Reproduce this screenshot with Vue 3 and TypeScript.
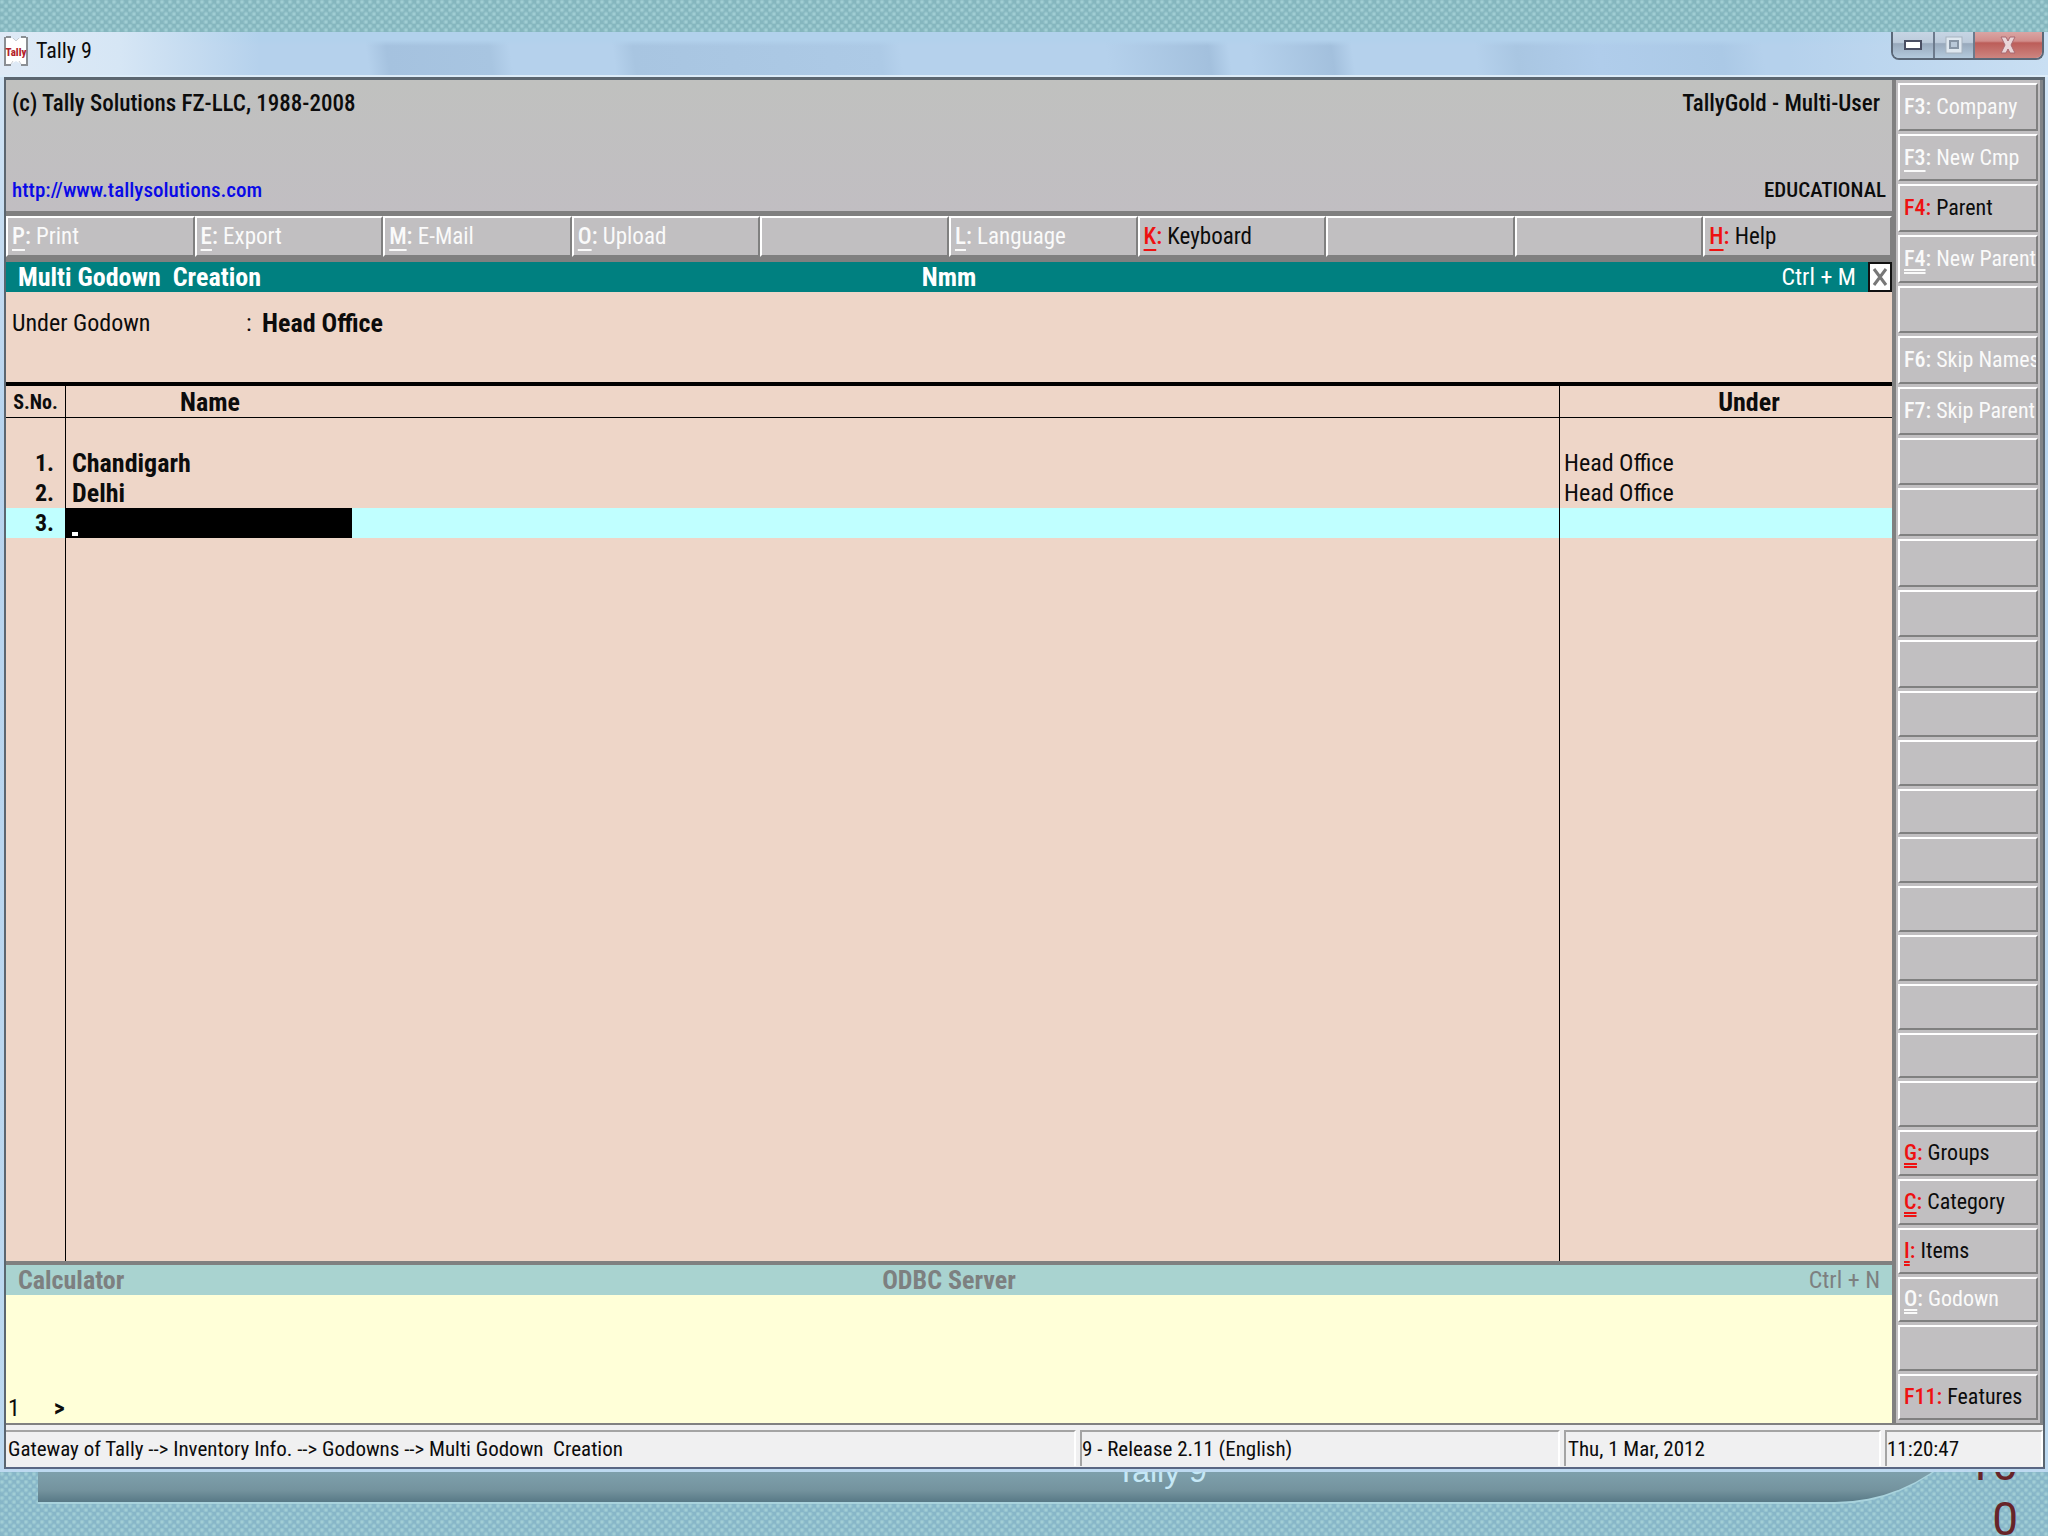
<script setup lang="ts">
import { ref } from 'vue'

interface Command {
  key?: string
  label?: string
  line?: 'single' | 'double'
  active?: boolean
}

interface Godown {
  no: number
  name: string
  under: string
}

const toolbar: Command[] = [
  { key: 'P', label: 'Print', line: 'single' },
  { key: 'E', label: 'Export', line: 'single' },
  { key: 'M', label: 'E-Mail', line: 'single' },
  { key: 'O', label: 'Upload', line: 'single' },
  {},
  { key: 'L', label: 'Language', line: 'single' },
  { key: 'K', label: 'Keyboard', line: 'single', active: true },
  {},
  {},
  { key: 'H', label: 'Help', line: 'single', active: true },
]

const blanks = (count: number): Command[] => Array.from({ length: count }, () => ({}))

const upperCommands: Command[] = [
  { key: 'F3', label: 'Company' },
  { key: 'F3', label: 'New Cmp', line: 'single' },
  { key: 'F4', label: 'Parent', active: true },
  { key: 'F4', label: 'New Parent', line: 'double' },
  {},
  { key: 'F6', label: 'Skip Names' },
  { key: 'F7', label: 'Skip Parent' },
  ...blanks(5),
]

const lowerCommands: Command[] = [
  ...blanks(9),
  { key: 'G', label: 'Groups', line: 'double', active: true },
  { key: 'C', label: 'Category', line: 'double', active: true },
  { key: 'I', label: 'Items', line: 'double', active: true },
  { key: 'O', label: 'Godown', line: 'double' },
  {},
  { key: 'F11', label: 'Features', active: true },
]

const commandGroups = [
  { id: 'upper', items: upperCommands },
  { id: 'lower', items: lowerCommands },
]

const godowns: Godown[] = [
  { no: 1, name: 'Chandigarh', under: 'Head Office' },
  { no: 2, name: 'Delhi', under: 'Head Office' },
]

const newName = ref('')
</script>

<template>
  <div class="slide">
    <div class="window">
      <header class="titlebar">
        <svg class="logo" viewBox="0 0 24 30" aria-hidden="true">
          <path d="M2 2h6l4 3 4-3h6v26h-5l-5-3-5 3H2z" fill="#fff" />
          <path d="M1 1v28h6M23 1v28h-6M2 1h5M17 1h5" fill="none" stroke="#8b8f94" stroke-width="2" />
          <path d="M7 28l2-3M17 28l-2-3M9 2l3 3 3-3" fill="none" stroke="#c9cdd2" stroke-width="1" />
          <text x="12" y="20" text-anchor="middle" font-size="11" font-weight="800" fill="#b3222a">Tally</text>
        </svg>
        <h1 class="app-name">Tally 9</h1>
        <div class="controls">
          <button type="button" class="control minimise" aria-label="Minimise">
            <svg viewBox="0 0 18 10" width="18" height="10"><rect x="1" y="1" width="16" height="8" fill="#fff" stroke="#4a4f63" stroke-width="2" /></svg>
          </button>
          <button type="button" class="control maximise" aria-label="Maximise">
            <svg viewBox="0 0 18 18" width="18" height="18">
              <rect x="1" y="1" width="16" height="16" fill="#dfe8f0" stroke="#a7b3c0" stroke-width="1" />
              <rect x="5" y="5" width="8" height="7" fill="#b9c8d8" stroke="#8795a5" stroke-width="2" />
            </svg>
          </button>
          <button type="button" class="control close" aria-label="Close">
            <svg viewBox="0 0 18 18" width="18" height="18">
              <path d="M2 1h5l2 4 2-4h5l-4 8 4 8h-5l-2-4-2 4H2l4-8z" fill="#e9d5d8" stroke="#a96970" stroke-width="1" />
            </svg>
          </button>
        </div>
      </header>

      <div class="frame">
        <div class="workspace">
          <div class="main">
            <section class="info">
              <div class="info-row">
                <span>(c) Tally Solutions FZ-LLC, 1988-2008</span>
                <span class="edition">TallyGold - Multi-User</span>
              </div>
              <div class="info-row small">
                <a href="http://www.tallysolutions.com">http://www.tallysolutions.com</a>
                <span>EDUCATIONAL</span>
              </div>
            </section>

            <nav class="toolbar" aria-label="Toolbar">
              <button v-for="(c, i) in toolbar" :key="i" type="button" class="cmd" :class="{ active: c.active }">
                <template v-if="c.key"><b><span :class="c.line">{{ c.key }}</span>:</b> {{ c.label }}</template>
              </button>
            </nav>

            <div class="caption">
              <h2>Multi Godown&nbsp; Creation</h2>
              <b>Nmm</b>
              <div class="caption-end">
                <span>Ctrl + M</span>
                <button type="button" class="caption-close" aria-label="Close form">
                  <svg viewBox="0 0 16 20" width="16" height="20"><path d="M2 2l12 16M14 2L2 18" stroke="#777" stroke-width="3" /></svg>
                </button>
              </div>
            </div>

            <section class="form">
              <div class="parent">
                <span class="parent-label">Under Godown</span>
                <span class="colon">:</span>
                <b>Head Office</b>
              </div>
              <table class="grid">
                <thead>
                  <tr>
                    <th class="no">S.No.</th>
                    <th class="name">Name</th>
                    <th class="under">Under</th>
                  </tr>
                </thead>
                <tbody>
                  <tr class="row"><td></td><td></td><td></td></tr>
                  <tr v-for="g in godowns" :key="g.no" class="row">
                    <td class="no">{{ g.no }}.</td>
                    <td class="name">{{ g.name }}</td>
                    <td class="under">{{ g.under }}</td>
                  </tr>
                  <tr class="row current">
                    <td class="no">3.</td>
                    <td class="entry"><input v-model="newName" type="text" aria-label="Name of godown 3" /></td>
                    <td></td>
                  </tr>
                  <tr class="filler"><td></td><td></td><td></td></tr>
                </tbody>
              </table>
            </section>

            <section class="calc">
              <div class="calc-head">
                <h2>Calculator</h2>
                <b>ODBC Server</b>
                <span class="calc-key">Ctrl + N</span>
              </div>
              <div class="calc-body"><span>1</span><b>&gt;</b></div>
            </section>
          </div>

          <aside class="side" aria-label="Commands">
            <div v-for="group in commandGroups" :key="group.id" class="group" :class="group.id">
              <button v-for="(c, i) in group.items" :key="i" type="button" class="cmd" :class="{ active: c.active }">
                <template v-if="c.key"><b><span :class="c.line">{{ c.key }}</span>:</b> {{ c.label }}</template>
              </button>
            </div>
          </aside>
        </div>

        <footer class="status">
          <span class="path">Gateway of Tally --&gt; Inventory Info. --&gt; Godowns --&gt; Multi Godown&nbsp; Creation</span>
          <span class="release">9 - Release 2.11 (English)</span>
          <span class="date">Thu, 1 Mar, 2012</span>
          <span class="time">11:20:47</span>
        </footer>
      </div>
    </div>

    <div class="slide-foot">
      <div class="band"><span>Tally 9</span></div>
      <div class="page-no">10<br />0</div>
    </div>
  </div>
</template>

<style>
body {
  margin: 0;
}
</style>

<style scoped>
* {
  box-sizing: border-box;
}

.slide {
  min-height: 100vh;
  display: flex;
  flex-direction: column;
  padding-top: 32px;
  overflow: hidden;
  font-family: 'Roboto Condensed', 'Liberation Sans', sans-serif;
  font-size: 24px;
  line-height: 30px;
  color: #0c0c0c;
  background:
    radial-gradient(circle at 2px 2px, #a9d5da 0, transparent 3px) 0 0 / 8px 8px,
    radial-gradient(circle at 6px 6px, #a9d5da 0, transparent 3px) 0 0 / 8px 8px,
    linear-gradient(#85b6be, #87b6c8);
}

h1,
h2 {
  margin: 0;
  font-size: 26px;
  line-height: 30px;
}

button {
  font: inherit;
  color: inherit;
  margin: 0;
  padding: 0;
}

/* Window chrome */
.window {
  flex: 1;
  display: flex;
  flex-direction: column;
  padding: 0 3px 3px 4px;
  background: linear-gradient(#d4e6f6 0, #b8d4ee 400px, #bdd9f0);
}

.titlebar {
  display: flex;
  height: 45px;
  margin: 0 -3px 0 -4px;
  padding: 0 4px;
  border-bottom: 2px solid #dcecf9;
  background:
    linear-gradient(90deg, #dfeaf6 0, #d6e6f5 120px, transparent 260px, transparent calc(100% - 260px), #c9dff3 100%),
    linear-gradient(#b2d1ec 0, #b2d1ec 8px, transparent 14px),
    linear-gradient(82deg, #b5d1ec 18%, #a5c2df 19%, #a8c5e1 24%, #b5d1ec 25%, #b5d1ec 30%, #a8c5e1 31%, #adcae6 43%, #b5d1ec 44%, #b5d1ec 54%, #a3c0dd 59%, #b5d1ec 60%, #b5d1ec 61%, #a3c0dd 65%, #b5d1ec 66%, #b5d1ec 72%, #a9c6e2 74%, #b0cdeb 78%, #abc9e6 84%, #b5d1ec 86%);
}

.logo {
  width: 24px;
  height: 30px;
  margin-top: 4px;
}

.app-name {
  margin: 4px 0 0 8px;
  font-size: 22px;
  font-weight: 400;
}

.controls {
  display: flex;
  width: 153px;
  height: 28px;
  margin-left: auto;
  border: 2px solid #5b6878;
  border-top: 0;
  border-radius: 0 0 8px 8px;
  overflow: hidden;
}

.control {
  display: flex;
  align-items: center;
  justify-content: center;
  border: 0;
  border-right: 2px solid #6c7a8c;
  background: linear-gradient(#c7d5e4 0, #bccbdb 40%, #98a9bc 45%, #b4cadd 100%);
}

.minimise {
  flex: 42;
}

.maximise {
  flex: 40;
}

.close {
  flex: 71;
  border-right: 0;
  background: linear-gradient(#d9a5a4 0, #d18d8b 35%, #bc5d59 42%, #cc8580 100%);
}

.frame {
  flex: 1;
  display: flex;
  flex-direction: column;
  border: 2px solid #5b6670;
  border-top-width: 3px;
  border-bottom-color: #5a6783;
  background: #c1bfc1;
}

.workspace {
  flex: 1;
  display: flex;
}

.main {
  flex: 1;
  min-width: 0;
  display: flex;
  flex-direction: column;
  border-right: 4px solid #808080;
}

/* Product information */
.info {
  height: 131px;
  display: flex;
  flex-direction: column;
  justify-content: space-between;
  padding: 9px 6px 6px;
  background: linear-gradient(#c0c1bf, #c1bec2);
}

.info-row {
  display: flex;
  justify-content: space-between;
  font-size: 23px;
  font-weight: 500;
}

.info-row.small {
  font-size: 21px;
}

.edition {
  padding-right: 6px;
}

a {
  color: #0a0ae6;
  text-decoration: none;
}

/* Command buttons */
.toolbar {
  display: flex;
  height: 51px;
  padding: 2px 0 5px;
  border-top: 3px solid #808080;
  background: #808080;
  font-size: 23px;
}

.cmd {
  flex: 1 1 0;
  min-width: 0;
  min-height: 0;
  overflow: hidden;
  text-align: left;
  white-space: nowrap;
  padding-left: 4px;
  color: #fafafa;
  background: #c1bfc1;
  border: 2px solid;
  border-color: #fff #808080 #808080 #fff;
}

.cmd b {
  font-weight: 500;
}

.cmd.active {
  color: #0c0c0c;
}

.cmd.active b {
  color: #ee1111;
}

.single,
.double {
  text-decoration: underline 2px;
  text-underline-offset: 5px;
  text-decoration-skip-ink: none;
}

.double {
  text-decoration-style: double;
  text-underline-offset: 3px;
}

/* Form caption */
.caption,
.calc-head {
  display: grid;
  grid-template-columns: 1fr auto 1fr;
  height: 30px;
  color: #fff;
  background: #008080;
}

.caption h2,
.calc-head h2 {
  padding-left: 12px;
}

.caption b,
.calc-head b {
  font-size: 26px;
}

.caption-end {
  display: flex;
  justify-content: flex-end;
  gap: 12px;
}

.caption-close {
  display: flex;
  align-items: center;
  justify-content: center;
  width: 24px;
  border: 2px solid #111;
  background: #fff;
}

/* Godown form */
.form {
  flex: 1;
  display: flex;
  flex-direction: column;
  background: #eed6c8;
}

.parent {
  display: flex;
  height: 90px;
  padding: 16px 6px 0;
}

.parent b {
  font-size: 26px;
}

.parent-label {
  width: 234px;
}

.colon {
  width: 16px;
}

.grid {
  flex: 1;
  width: 100%;
  border-collapse: separate;
  border-spacing: 0;
  table-layout: fixed;
  border-top: 4px solid #000;
}

th,
td {
  padding: 0;
  border-right: 1px solid #000;
}

th:last-child,
td:last-child {
  border-right: 0;
}

th {
  height: 32px;
  font-size: 26px;
  border-bottom: 1px solid #000;
}

th.no {
  width: 60px;
  font-size: 20px;
}

th.name {
  text-align: left;
  padding-left: 114px;
}

th.under {
  width: 332px;
  padding-left: 46px;
}

.row td {
  height: 30px;
}

.row .no {
  padding-right: 11px;
  text-align: right;
  font-weight: 700;
}

.row .name {
  padding-left: 6px;
  font-size: 26px;
  font-weight: 700;
}

.row .under {
  padding-left: 4px;
}

.current {
  background: #c0ffff;
}

input {
  display: block;
  width: 286px;
  height: 30px;
  padding: 0 6px;
  border: 0;
  outline: 0;
  font: inherit;
  font-weight: 700;
  color: #fff;
  background: linear-gradient(#fff, #fff) 6px 24px / 6px 4px no-repeat #000;
}

.filler td {
  height: 100%;
}

/* Calculator */
.calc {
  border-top: 4px solid #808080;
  border-bottom: 2px solid #808080;
  background: #ffffd8;
}

.calc-head {
  color: #7d8080;
  background: #a9d3d0;
}

.calc-key {
  padding-right: 12px;
  text-align: right;
}

.calc-body {
  display: flex;
  gap: 34px;
  height: 128px;
  align-items: flex-end;
  padding: 0 2px;
}

/* Side commands */
.side {
  display: flex;
  flex-direction: column;
  gap: 3px;
  width: 147px;
  padding: 3px 2px 3px 2px;
  font-size: 22px;
  border-right: 3px solid #808488;
  border-bottom: 2px solid #808080;
}

.group {
  display: flex;
  flex-direction: column;
  gap: 3px;
}

.upper {
  flex: 605 1 0;
}

.lower {
  flex: 729 1 0;
}

/* Status bar */
.status {
  display: flex;
  gap: 4px;
  padding-top: 5px;
  height: 42px;
  font-size: 21px;
  background: #f0f0f1;
}

.status span {
  padding: 2px 0 0 2px;
  height: 36px;
  white-space: nowrap;
  border-top: 2px solid #a4a4a4;
  border-left: 2px solid #a4a4a4;
  border-right: 2px solid #fff;
}

.status .path {
  flex: 1;
  border-left: 0;
}

.status .release {
  width: 480px;
  padding-left: 0;
}

.status .date {
  width: 317px;
}

.status .time {
  width: 158px;
  padding-left: 0;
}

/* Slide footer */
.slide-foot {
  position: relative;
  display: flex;
  align-items: flex-end;
  height: 64px;
  overflow: hidden;
}

.band {
  flex: 1;
  display: flex;
  align-items: flex-end;
  justify-content: center;
  height: 170px;
  margin: 0 43px 32px 38px;
  padding: 0 0 11px 280px;
  font-family: 'Liberation Sans', sans-serif;
  font-size: 32px;
  line-height: 40px;
  color: #c5e8f6;
  background: linear-gradient(#7d9fab 140px, #74939e 156px, #587986);
  border-bottom: 2px solid #a9d3dd;
  border-radius: 0 0 170px 0;
}

.page-no {
  position: absolute;
  right: 30px;
  bottom: -11px;
  font-family: Roboto, sans-serif;
  font-size: 46px;
  line-height: 55px;
  text-align: right;
  color: #672428;
}
</style>
